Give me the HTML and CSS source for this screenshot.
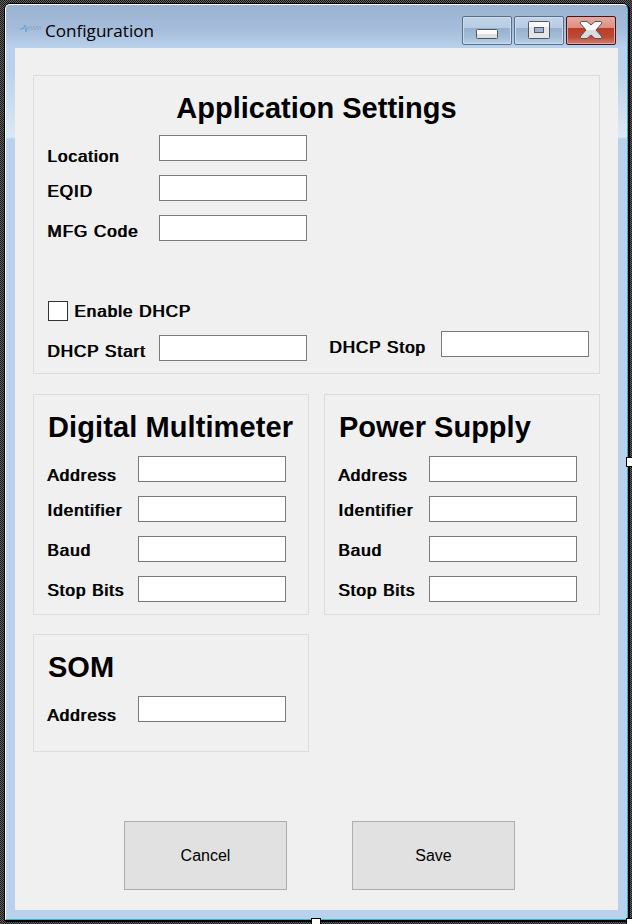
FILE: index.html
```html
<!DOCTYPE html>
<html lang="en">
<head>
<meta charset="utf-8">
<title>Configuration</title>
<link rel="stylesheet" href="styles.css">
</head>
<body>
<div class="window">
  <header class="titlebar">
    <svg class="logo" width="22" height="12" viewBox="0 0 22 12">
      <path d="M0 7L2 5L3 6L5 2L6 9L7 5" fill="none" stroke="#58a9d8" stroke-width="1"/>
      <path d="M7 4H22M8 6H21" stroke="#7f91a9" stroke-width="1" stroke-dasharray="2 1" opacity=".65"/>
    </svg>
    <h1 class="title">Configuration</h1>
    <div class="controls">
      <button class="ctl" aria-label="Minimize"><svg width="50" height="29" viewBox="0 0 50 29"><rect x="14.500" y="13.500" width="21" height="9" rx="1" fill="#dedede" stroke="#535666"/><path d="M15 16H35" stroke="#fafafa" stroke-width="4"/></svg></button>
      <button class="ctl" aria-label="Maximize"><svg width="50" height="29" viewBox="0 0 50 29"><rect x="14.500" y="5.500" width="21" height="17" rx="1" fill="#e6e6e6" stroke="#535666"/><path d="M15 8.500H35" stroke="#fafafa" stroke-width="5"/><rect x="20.500" y="11.500" width="9" height="5" fill="#9ab3d0" stroke="#535666"/></svg></button>
      <button class="ctl close" aria-label="Close"><svg width="50" height="29" viewBox="0 0 50 29"><defs><linearGradient id="x" x2="0" y2="1"><stop offset=".5" stop-color="#fafafa"/><stop offset=".5" stop-color="#dcdcdc"/></linearGradient></defs><path d="M15 5.500H21L25 9L29 5.500H35L36 7L30 14L36 21L35 22.500H29L25 19L21 22.500H15L14 21L20 14L14 7Z" fill="url(#x)" stroke="#535666"/></svg></button>
    </div>
  </header>
  <main class="client">
    <section class="panel app">
      <h2>Application Settings</h2>
      <div class="row first"><label for="loc">Location</label><input id="loc"></div>
      <div class="row"><label for="eq">EQID</label><input id="eq"></div>
      <div class="row"><label for="mfg">MFG Code</label><input id="mfg"></div>
      <div class="check"><input type="checkbox" id="dhcp"><label for="dhcp">Enable DHCP</label></div>
      <div class="pair">
        <div class="row"><label for="start">DHCP Start</label><input id="start"></div>
        <div class="row stop"><label for="end">DHCP Stop</label><input id="end"></div>
      </div>
    </section>
    <div class="devices">
      <section class="panel device">
        <h2 class="wide">Digital Multimeter</h2>
        <div class="row first"><label for="da">Address</label><input id="da"></div>
        <div class="row"><label for="di">Identifier</label><input id="di"></div>
        <div class="row"><label for="db">Baud</label><input id="db"></div>
        <div class="row"><label for="ds">Stop Bits</label><input id="ds"></div>
      </section>
      <section class="panel device">
        <h2>Power Supply</h2>
        <div class="row first"><label for="pa">Address</label><input id="pa"></div>
        <div class="row"><label for="pi">Identifier</label><input id="pi"></div>
        <div class="row"><label for="pb">Baud</label><input id="pb"></div>
        <div class="row"><label for="ps">Stop Bits</label><input id="ps"></div>
      </section>
      <section class="panel device som">
        <h2>SOM</h2>
        <div class="row first"><label for="sa">Address</label><input id="sa"></div>
      </section>
    </div>
    <footer class="actions"><button>Cancel</button><button>Save</button></footer>
  </main>
</div>
<i class="handle right"></i><i class="handle bottom"></i><i class="handle corner"></i>
</body>
</html>
```

FILE: styles.css
```css
* { box-sizing: border-box; }
body {
  margin: 0;
  width: 632px;
  height: 924px;
  padding: 4px 4px 4px 5px;
  overflow: hidden;
  position: relative;
  background: repeating-conic-gradient(#606060 0 25%, #181818 0 50%) 0 0 / 2px 2px;
  font-family: "Liberation Sans", Arial, sans-serif;
  color: #000;
}
.window {
  width: 623px;
  height: 916px;
  padding: 0 9px 9px;
  border: 1px solid #fff;
  border-right-color: #35b5d2;
  border-bottom-color: #35b5d2;
  border-radius: 5px 5px 0 0;
  box-shadow: 0 0 0 1px #000, 1px 1px 0 1px #000;
  background:
    linear-gradient(#9ab3d0, #a5bdda 24px, #b9d1ea 43px, transparent 43px),
    linear-gradient(#b9d1ea 65px, #dce8f5 132px, #b9d1ea 134px);
}
.titlebar { display: flex; height: 43px; }
.logo { margin: 18px 3px 0 5px; flex: none; }
.title {
  margin: 12px 0 0;
  font: 400 17.100px/28px "Open Sans", "Noto Sans", sans-serif;
  flex: 1;
}
.controls { display: flex; gap: 2px; padding-top: 11px; margin-right: 2px; }
.ctl {
  width: 50px;
  height: 29px;
  padding: 0;
  border: 1px solid #5d6e89;
  border-radius: 2px;
  box-shadow: inset 0 0 0 1px #cbdced;
  background: linear-gradient(#c2d5e9, #b6cce3 42%, #98b0cc 42%, #a4bdd9 75%, #bad1e9);
}
.ctl svg { display: block; margin: -1px; }
.close {
  border-color: #471420;
  box-shadow: inset 0 0 0 1px #e3a59c;
  background: linear-gradient(#e8aaa0, #dc8d80 42%, #b83c27 42%, #bd4b35 75%, #d58070);
}
.client {
  width: 603px;
  height: 862px;
  padding: 27px 18px 20px;
  background: #f0f0f0;
}
.panel { border: 1px solid #dcdcdc; }
h2 {
  margin: 0;
  font-size: 29px;
  line-height: 34px;
  font-weight: 700;
  white-space: nowrap;
}
.app { height: 299px; padding: 15px 10px 0 14px; }
.app h2 { text-align: center; margin-bottom: 10px; padding-right: 4px; }
.row { display: flex; height: 26px; margin-bottom: 14px; }
.row label {
  width: 111px;
  padding-top: 7px;
  flex: none;
}
label {
  font-size: 17px;
  line-height: 20px;
  letter-spacing: 1px;
  text-shadow: 1px 0 #000;
  white-space: nowrap;
}
.app .row label { margin-left: -1px; width: 112px; }
.app .first label { padding-top: 12px; }
.row input {
  width: 148px;
  height: 26px;
  padding: 0 3px;
  border: 1px solid #7a7a7a;
  border-radius: 0;
  background: #fff;
}
.check { display: flex; gap: 6px; height: 20px; margin-top: 60px; }
.check label { padding-top: 1px; }
.check input {
  appearance: none;
  width: 20px;
  height: 20px;
  margin: 0;
  border: 1px solid #333;
  background: #fff;
}
.pair { display: flex; justify-content: space-between; margin-top: 14px; }
.pair .stop { margin-top: -4px; }
.devices { display: grid; grid-template-columns: 276px 276px; gap: 19px 15px; margin-top: 20px; }
.device { height: 221px; padding: 15px 0 0 13px; }
.device h2 { margin: 0 0 12px 1px; }
.device .wide { letter-spacing: .1px; }
.device .row label { width: 91px; padding-top: 5px; }
.device .first label { padding-top: 10px; }
.som { height: 118px; }
.actions { display: flex; gap: 65px; padding-left: 91px; margin-top: 69px; }
.actions button {
  width: 163px;
  height: 69px;
  padding: 0;
  border: 1px solid #adadad;
  background: #e1e1e1;
  color: #000;
  font: 16px "Liberation Sans", Arial, sans-serif;
}
.handle { position: absolute; width: 10px; height: 10px; background: #fff; border: 1px solid #000; }
.right { left: 626px; top: 457px; }
.bottom { left: 311px; top: 918px; }
.corner { left: 626px; top: 918px; }
```
